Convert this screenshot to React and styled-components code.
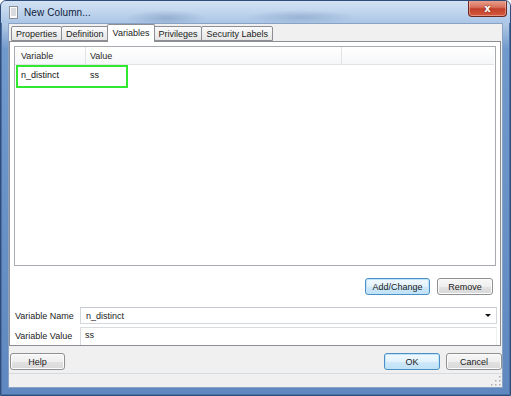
import styled, { createGlobalStyle } from "styled-components";

const GlobalStyle = createGlobalStyle`
  html, body {
    margin: 0;
    padding: 0;
    background: #ffffff;
  }
  body {
    width: 511px;
    height: 396px;
    overflow: hidden;
    font-family: "Liberation Sans", Arial, sans-serif;
    font-size: 9px;
    color: #1b1b1b;
  }
`;

const Window = styled.div`
    width: 511px;
    height: 396px;
    box-sizing: border-box;
    display: flex;
    flex-direction: column;
    border: 1px solid #2f4d7a;
    border-radius: 6px 6px 0 0;
    background: linear-gradient(180deg, #c3d7ed 0, #b4cbe6 22px, #7099cc 48px, #5f88c0 100%);
    box-shadow: inset 1px 0 0 #4a70a6, inset -1px 0 0 #4a70a6, inset 0 -1px 0 #4a70a6;
    overflow: hidden;
`;

const TitleBar = styled.div`
    height: 22px;
    flex: none;
    display: flex;
    align-items: center;
    padding-left: 8px;
    background:
        radial-gradient(ellipse 40px 8px at 165px 17px, rgba(110, 140, 180, 0.45), transparent),
        radial-gradient(ellipse 55px 7px at 300px 16px, rgba(110, 140, 180, 0.4), transparent),
        linear-gradient(180deg, #d3e2f3 0, #bcd2ec 60%, #aac5e6 100%);
`;

const Title = styled.span`
    font-size: 10px;
    color: #10203a;
    margin-left: 6px;
    letter-spacing: 0.1px;
`;

const CloseButton = styled.div`
    align-self: flex-start;
    margin: -1px 3px 0 auto;
    width: 39px;
    height: 17px;
    box-sizing: border-box;
    border: 1px solid #6b2a22;
    border-top: none;
    border-radius: 0 0 4px 4px;
    background: linear-gradient(180deg, #eba593 0, #d9715c 45%, #c2402a 55%, #d35a3e 100%);
    box-shadow: inset 0 0 0 1px rgba(255, 210, 200, 0.45);
    display: flex;
    align-items: center;
    justify-content: center;
    color: #fff;
    font-family: "DejaVu Sans", sans-serif;
    font-weight: bold;
    font-size: 10px;
    text-shadow: 0 0 2px #6b2018;
`;

const Client = styled.div`
    flex: 1;
    margin: 0 7px 8px 7px;
    border: 1px solid #8aa3c4;
    background: #f0f0f0;
    display: flex;
    flex-direction: column;
`;

const TabStrip = styled.div`
    height: 17px;
    display: flex;
    align-items: flex-end;
    padding-left: 2px;
    position: relative;
    z-index: 1;
`;

const Tab = styled.div`
    box-sizing: border-box;
    height: ${(p) => (p.$active ? "18px" : "15px")};
    margin-bottom: ${(p) => (p.$active ? "-1px" : "0")};
    margin-left: ${(p) => (p.$active ? "-2px" : "-1px")};
    margin-right: ${(p) => (p.$active ? "-1px" : "0")};
    padding: 0 ${(p) => (p.$active ? "5px" : "4px")};
    border: 1px solid #8c8e94;
    border-bottom: ${(p) => (p.$active ? "none" : "1px solid #8c8e94")};
    border-radius: 2px 2px 0 0;
    background: ${(p) =>
        p.$active ? "#ffffff" : "linear-gradient(180deg, #fbfbfb 0, #efefef 50%, #e5e5e5 100%)"};
    display: flex;
    align-items: center;
    padding-bottom: ${(p) => (p.$active ? "2px" : "0")};
    position: relative;
    z-index: ${(p) => (p.$active ? 2 : 1)};
    &:first-child {
        margin-left: 0;
    }
`;

const Panel = styled.div`
    height: 305px;
    box-sizing: border-box;
    margin-right: 1px;
    border: 1px solid #8c8e94;
    background: #ffffff;
    padding: 4px 4px 0 4px;
    display: flex;
    flex-direction: column;
`;

const ListBox = styled.div`
    height: 220px;
    box-sizing: border-box;
    border: 1px solid #a7abb0;
    position: relative;
    background: #fff;
`;

const ListRow = styled.div`
    display: grid;
    grid-template-columns: 71px 256px 1fr;
    height: ${(p) => (p.$header ? "17px" : "19px")};
    align-items: center;
    margin-right: ${(p) => (p.$header ? "1px" : "0")};
    background: ${(p) => (p.$header ? "linear-gradient(180deg, #ffffff 0, #f6f7f9 100%)" : "transparent")};
    border-bottom: ${(p) => (p.$header ? "1px solid #e2e3e5" : "none")};
`;

const Cell = styled.div`
    height: 100%;
    display: flex;
    align-items: center;
    padding-left: ${(p) => (p.$first ? "6px" : "4px")};
    border-right: ${(p) => (p.$divider ? "1px solid #e2e3e5" : "none")};
    color: ${(p) => (p.$header ? "#2a2a2a" : "#111")};
`;

const Highlight = styled.div`
    position: absolute;
    left: 1px;
    top: 18px;
    width: 112px;
    height: 23px;
    box-sizing: border-box;
    border: 2px solid #31e831;
    pointer-events: none;
`;

const ButtonRow = styled.div`
    display: flex;
    justify-content: ${(p) => (p.$spread ? "space-between" : "flex-end")};
    gap: 7px;
    margin-top: ${(p) => p.$top || 0}px;
    padding-right: ${(p) => p.$right || 0}px;
    padding-left: ${(p) => p.$left || 0}px;
`;

const Group = styled.div`
    display: flex;
    gap: 6px;
`;

const Button = styled.div`
    box-sizing: border-box;
    height: 17px;
    min-width: ${(p) => p.$width || 56}px;
    padding: 0 6px;
    display: flex;
    align-items: center;
    justify-content: center;
    border-radius: 3px;
    border: 1px solid ${(p) => (p.$primary ? "#4b8fc4" : "#8f9092")};
    background: ${(p) =>
        p.$primary
            ? "linear-gradient(180deg, #f2f9fe 0, #e2f2fc 50%, #cfe9fa 51%, #c0e1f5 100%)"
            : "linear-gradient(180deg, #f7f7f7 0, #efefef 50%, #e2e2e2 51%, #d8d8d8 100%)"};
    box-shadow: inset 0 0 0 1px ${(p) => (p.$primary ? "#bfe4fa" : "#fcfcfc")};
    color: #1a1a1a;
`;

const FieldRow = styled.div`
    display: flex;
    align-items: center;
    margin-top: ${(p) => p.$top}px;
    height: ${(p) => p.$height}px;
`;

const Label = styled.div`
    width: 65px;
    padding-left: 1px;
    flex: none;
`;

const Combo = styled.div`
    flex: 1;
    height: 100%;
    box-sizing: border-box;
    margin-right: -1px;
    border: 1px solid #d4d8de;
    border-top-color: #c6cad0;
    display: flex;
    align-items: center;
    padding-left: 5px;
    padding-right: 5px;
`;

const TextField = styled.div`
    flex: 1;
    height: 100%;
    box-sizing: border-box;
    margin-right: -1px;
    border: 1px solid #d8dce1;
    border-right-color: #eef0f2;
    border-bottom: none;
    padding: 2px 4px;
`;

const Arrow = styled.span`
    margin-left: auto;
    width: 0;
    height: 0;
    border-left: 3px solid transparent;
    border-right: 3px solid transparent;
    border-top: 3px solid #111;
`;

const StatusStrip = styled.div`
    flex: 1;
    margin-top: 3px;
    border-top: 1px solid #d6dbe2;
    display: flex;
    justify-content: flex-end;
    align-items: flex-end;
    padding: 0 1px 1px 0;
`;

function DocIcon() {
    return (
        <svg width="9" height="13" viewBox="0 0 9 13">
            <rect x="0.5" y="0.5" width="8" height="12" fill="#fbfbfb" stroke="#8b8f96" />
            <line x1="2" y1="3" x2="7" y2="3" stroke="#b6bac0" />
            <line x1="2" y1="5" x2="7" y2="5" stroke="#b6bac0" />
            <line x1="2" y1="7" x2="7" y2="7" stroke="#b6bac0" />
            <line x1="2" y1="9" x2="7" y2="9" stroke="#b6bac0" />
        </svg>
    );
}

function SizeGrip() {
    const dots = [[10, 2], [10, 6], [10, 10], [6, 6], [6, 10], [2, 10]];
    return (
        <svg width="12" height="12" viewBox="0 0 12 12">
            {dots.map(([x, y]) => (
                <rect key={`${x}-${y}`} x={x} y={y} width="1.5" height="1.5" fill="#a9adb3" />
            ))}
        </svg>
    );
}

const tabs = ["Properties", "Definition", "Variables", "Privileges", "Security Labels"];

export default function App() {
    return (
        <>
            <GlobalStyle />
            <Window>
                <TitleBar>
                    <DocIcon />
                    <Title>New Column...</Title>
                    <CloseButton>x</CloseButton>
                </TitleBar>
                <Client>
                    <TabStrip>
                        {tabs.map((t) => (
                            <Tab key={t} $active={t === "Variables"}>
                                {t}
                            </Tab>
                        ))}
                    </TabStrip>
                    <Panel>
                        <ListBox>
                            <ListRow $header>
                                <Cell $header $first $divider>Variable</Cell>
                                <Cell $header $divider>Value</Cell>
                                <Cell $header />
                            </ListRow>
                            <ListRow>
                                <Cell $first>n_distinct</Cell>
                                <Cell>ss</Cell>
                                <Cell />
                            </ListRow>
                            <Highlight />
                        </ListBox>
                        <ButtonRow $top={12} $right={3}>
                            <Button $primary $width={65}>Add/Change</Button>
                            <Button>Remove</Button>
                        </ButtonRow>
                        <FieldRow $top={12} $height={17}>
                            <Label>Variable Name</Label>
                            <Combo>
                                n_distinct
                                <Arrow />
                            </Combo>
                        </FieldRow>
                        <FieldRow $top={3} $height={18}>
                            <Label>Variable Value</Label>
                            <TextField>ss</TextField>
                        </FieldRow>
                    </Panel>
                    <ButtonRow $spread $top={7} $left={1}>
                        <Button $width={55}>Help</Button>
                        <Group>
                            <Button $primary $width={56}>OK</Button>
                            <Button $width={56}>Cancel</Button>
                        </Group>
                    </ButtonRow>
                    <StatusStrip>
                        <SizeGrip />
                    </StatusStrip>
                </Client>
            </Window>
        </>
    );
}
